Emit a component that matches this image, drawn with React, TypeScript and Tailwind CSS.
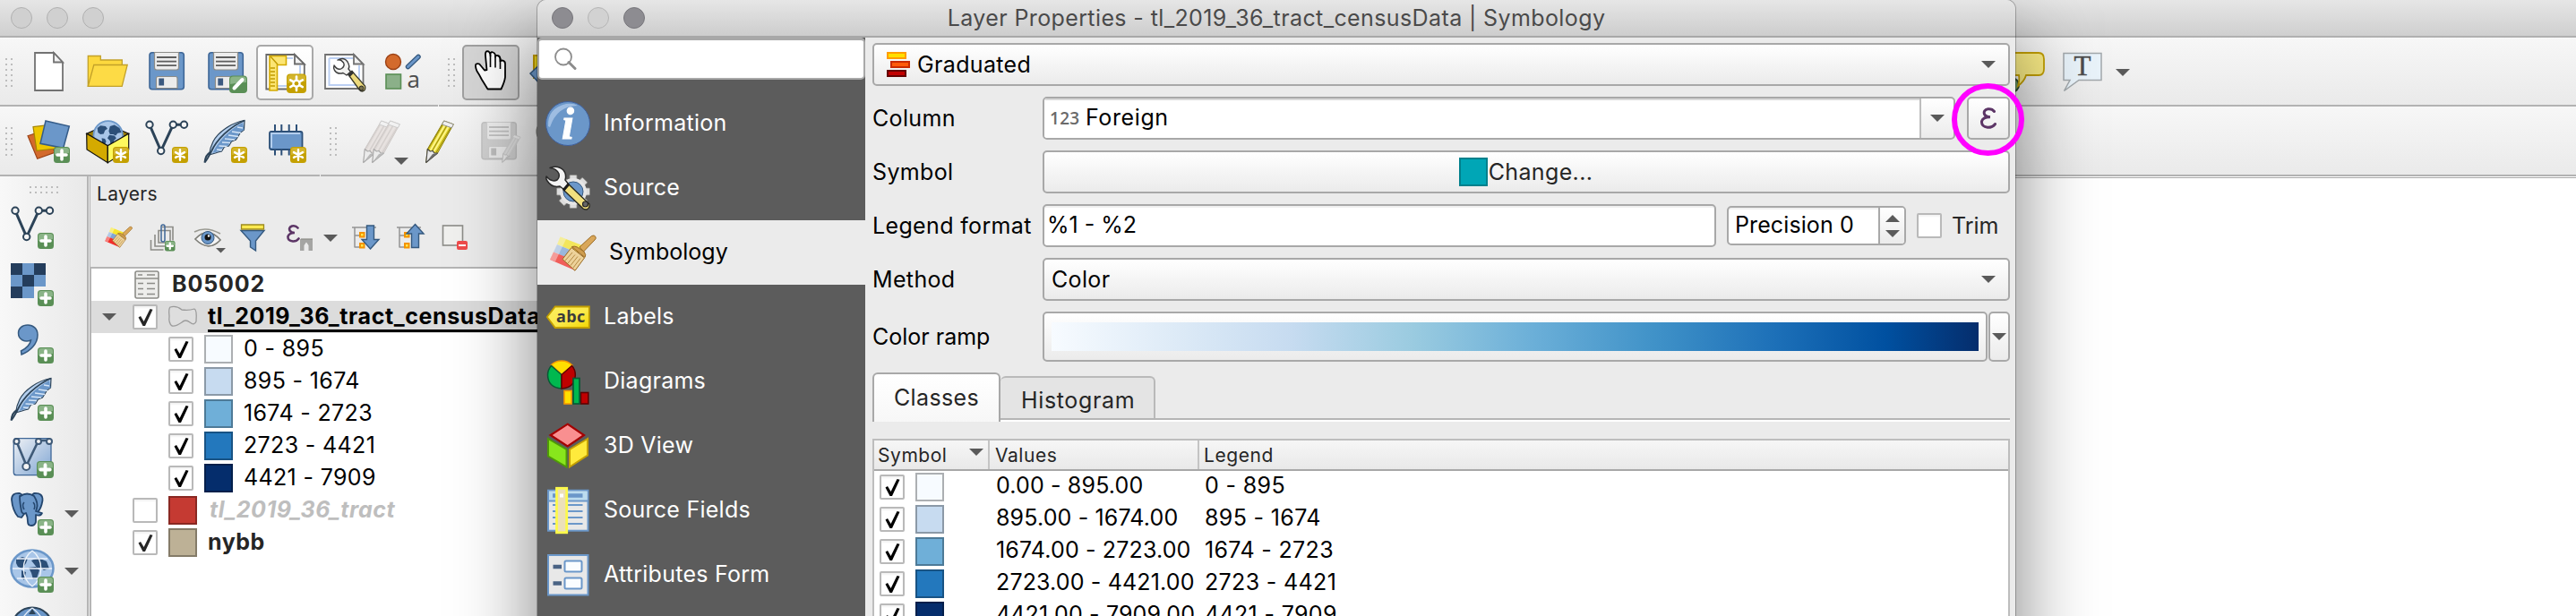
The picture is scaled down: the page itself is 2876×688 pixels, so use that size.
import type { ReactNode } from "react";

const INK = "#2c4358";
const BLUE = "#6b97c9";

function Icon({ children, className = "size-12" }: { children: ReactNode; className?: string }) {
  return (
    <svg viewBox="0 0 48 48" className={`shrink-0 overflow-visible ${className}`} fill="none">
      {children}
    </svg>
  );
}

function Arrow({ up = false, className = "" }: { up?: boolean; className?: string }) {
  return (
    <svg viewBox="0 0 16 8" className={`h-2 w-4 shrink-0 ${className}`}>
      <path d={up ? "M0 8h16L8 0z" : "M0 0h16L8 8z"} fill="#5a5a5a" />
    </svg>
  );
}

/* ---------- badges ---------- */

function PlusBadge({ x = 30, y = 30, s = 18 }: { x?: number; y?: number; s?: number }) {
  return (
    <g transform={`translate(${x} ${y}) scale(${s / 18})`}>
      <rect width="18" height="18" rx="3.5" fill="#5a8f56" />
      <path d="M1 9V4q0-3 3-3h10q3 0 3 3v3q-8 0-16 2z" fill="#8ab487" />
      <path d="M9 4v10M4 9h10" stroke="#fff" strokeWidth="3.6" strokeLinecap="round" />
    </g>
  );
}

function StarBadge({ x = 30, y = 30, s = 18 }: { x?: number; y?: number; s?: number }) {
  return (
    <g transform={`translate(${x} ${y}) scale(${s / 18})`}>
      <rect width="18" height="18" rx="3.5" fill="#c4a000" />
      <path d="M1 9V4q0-3 3-3h10q3 0 3 3v3q-8 0-16 2z" fill="#d3b52c" />
      <path d="M9 3.2v11.600M4 6.100l10 5.800M14 6.100L4 11.900" stroke="#fff" strokeWidth="2.4" strokeLinecap="round" />
    </g>
  );
}

function GearBadge() {
  return (
    <g transform="translate(26 26.5)">
      <rect width="22" height="21.5" rx="4" fill="#c4a000" />
      <path d="M1 10V4.500q0-3.500 3.500-3.500h13q3.500 0 3.500 3.500v4q-10 0-20 2z" fill="#d3b52c" />
      <path d="M11 3v15.600M4.200 6.900l13.600 7.800M17.800 6.900L4.200 14.700" stroke="#fff" strokeWidth="2.600" strokeLinecap="round" />
      <circle cx="11" cy="10.800" r="4.600" fill="#fff" />
      <circle cx="11" cy="10.800" r="2.300" fill="#c4a000" />
    </g>
  );
}

/* ---------- shared drawings ---------- */

function Floppy() {
  return (
    <>
      <rect x="5" y="2.700" width="38.300" height="41" rx="3" fill={BLUE} stroke="#3f6797" strokeWidth="1.600" />
      <path d="M10.500 2.500h27v17q0 2.500-2.500 2.500H13q-2.500 0-2.500-2.500z" fill="#ededed" stroke="#8c8c88" strokeWidth="1.200" />
      <path d="M13 8h22M13 12.700h22M13 17.200h22" stroke="#5d5d5d" strokeWidth="1.800" />
      <path d="M12.500 42.500v-11q0-2 2-2h19.500q2 0 2 2v11z" fill="#ececec" stroke="#8c8c88" strokeWidth="1.200" />
      <rect x="15.300" y="31.500" width="5.800" height="8" fill="#3c5a80" />
    </>
  );
}

function Feather() {
  return (
    <>
      <path d="M45 .500C30 3 15 14 10 24c-3 6-4 10-4.500 15l7-2 3-1 4-1 3-5 5-1 3-5 5-2 5-8 4-3z" fill="#b4cfee" stroke={INK} strokeWidth="1.200" />
      <path d="M43 3l1.500 8-5 3-4 7-6 3-3 5-5 1-3 4-9 3C15 24 28 11 43 3z" fill={BLUE} />
      <path d="M37 8l6 1M31 13l10 1.500M27 17l11 1.500M23 21l11 1M20 25l9 .500M16.500 29l9 .500M14 33l6 .500" stroke="#d5e5f7" strokeWidth="1.300" />
      <path d="M45 .500C28 8 14 22 8 35c-2.500 5-4.500 9-7.500 12.500" stroke={INK} strokeWidth="1.800" />
      <path d="M.500 47.500C1 43 3 38 7 36" stroke={INK} strokeWidth="2" />
    </>
  );
}

function Nodes() {
  return (
    <>
      <path d="M5 5.300l12.700 29.400L31.300 5.300h12" stroke={INK} strokeWidth="3" />
      <g fill="#f4f4f4" stroke={INK} strokeWidth="2">
        <circle cx="5" cy="5.300" r="3.700" />
        <circle cx="31.300" cy="5.300" r="3.700" />
        <circle cx="43.500" cy="5.300" r="3.700" />
        <circle cx="17.700" cy="34.500" r="3.700" />
      </g>
    </>
  );
}

function Pencil({ body = "#e3d32b", light = "#fdf588", dark = "#8f820c" }: { body?: string; light?: string; dark?: string }) {
  return (
    <>
      <path d="M8.700 47.500l1.600-15L28.700 1l10.600 3.800L21.500 37z" fill={body} stroke={dark} strokeWidth="1" />
      <path d="M13.500 34L30 5M17.500 35L34 7" stroke={light} strokeWidth="2" />
      <path d="M11 32.500L28 4M15.500 34.500L32 6M20 36.500L36.500 8" stroke={dark} strokeWidth=".9" />
      <path d="M26.500 5L28.700 1l10.600 3.800-2 4z" fill="#f0f0f0" stroke="#8b8b8b" strokeWidth=".9" />
      <path d="M8.700 47.500l1.600-15 3 2.500 3-.5 1.500 2.500 3.700 0z" fill="#e9e9e9" stroke="#444" strokeWidth="1.100" strokeLinejoin="round" />
      <path d="M8.700 47.500L16 38l5.500-1z" fill="#6e6e6e" />
    </>
  );
}

function Wrench() {
  return (
    <>
      <path d="M29 27.500l4-4L47.500 40q1.500 5-3 6-2 0-3.500-2z" fill="#ecd97c" stroke="#3a3a2a" strokeWidth="1.300" />
      <circle cx="43.500" cy="42.500" r="2.500" fill="#77704a" stroke="#222" strokeWidth="1" />
      <path d="M28 27l5-4.500 2 3-4.500 4.500z" fill="#333" />
      <path d="M17 11q7-4 11 2 3 5 1 8l2.500 3-4.500 4-4-2.500q-6 2-9.500-3-1.500-3-.5-5.500 4 6 8.500 3.500 4-3 2-6.500-3-4-6.500-3z" fill="#f2f2f0" stroke="#3d3d3d" strokeWidth="1.400" strokeLinejoin="round" />
    </>
  );
}

function Globe({ cx, cy, r }: { cx: number; cy: number; r: number }) {
  return (
    <g transform={`translate(${cx} ${cy}) scale(${r / 24})`}>
      <circle r="23" fill="#a9c6e8" stroke={BLUE} strokeWidth="2.500" />
      <path d="M-17-12l5-4 8 1 3 4-4 3-2 5-5 1-4-3zM-10 4l5 1 2 4-3 7-3 1zM3-15l7-2 8 5 3 7-6 1-3 4-4-2-5 0-2-5zM2-1l8 1 3 4-4 4-1 7-4 0-1-7-4-4z" fill="#2c4f78" />
      <path d="M15 6l3 1-1 4-3 0z" fill="#2c4f78" />
    </g>
  );
}

function BrushArt({ faded = false }: { faded?: boolean }) {
  return (
    <>
      <g opacity={faded ? 0.75 : 1}>
        <path d="M15.500 6.500L40 16l-4 9L12 15z" fill="#f6e52c" />
        <path d="M12 15l24 10-4 9L8 23.500z" fill="#7fa6d6" />
        <path d="M8 23.500L34 34l-2 10L4 32z" fill="#f22f2a" />
        <path d="M15.500 6.500L22 9 10 34l-6-2z" fill="#fff" opacity=".4" />
      </g>
      <path d="M37 18L50.500 5.500q3-1.500 4.500 1 .8 2-1 3.500L41.500 23z" fill="#d9a75a" stroke="#9a6a22" strokeWidth="1" />
      <path d="M28.500 17.500q3-1 6 .5l7.500 5q3 4 1 6.500z" fill="#cf9d4f" stroke="#9a6a22" strokeWidth="1" />
      <path d="M28 18.500L42.500 30 32 44.300 18 31.500z" fill="#edd29a" stroke="#9a6a22" strokeWidth="1" />
      <path d="M29 24L21 33M32 26.500L24 36M35 28.500L27 38.500M38 30.500L30 41" stroke="#b58a45" strokeWidth="1" />
    </>
  );
}

/* ---------- small controls ---------- */

function Check({ on = true, dark = false }: { on?: boolean; dark?: boolean }) {
  return (
    <span className="grid size-7 shrink-0 place-items-center rounded-[2px] border-2 border-[#b9b9b9] bg-white shadow-[inset_0_2px_2px_rgba(0,0,0,0.05)]">
      {on && (
        <svg viewBox="0 0 24 24" className="size-6 overflow-visible">
          <path d="M4.500 12.500l2.500-1.500 3.600 6L17.500 3l3 .8L12 22H9.500z" fill={dark ? "#262626" : "#000"} />
        </svg>
      )}
    </span>
  );
}

function DotGrip({ wide = false }: { wide?: boolean }) {
  return (
    <span
      className={`shrink-0 bg-[radial-gradient(circle_at_1px_1px,#bdbdbd_1.200px,transparent_1.500px)] bg-[length:6px_6px] ${wide ? "h-2 w-[34px]" : "h-[33px] w-2"}`}
    />
  );
}

function Slot({ children, className = "" }: { children?: ReactNode; className?: string }) {
  return <div className={`flex h-[62px] w-[66px] shrink-0 items-center justify-center ${className}`}>{children}</div>;
}

/* ---------- main window ---------- */

function FileToolbar() {
  return (
    <div className="flex h-[75px] shrink-0 items-center bg-gradient-to-b from-[#f7f7f7] to-[#eaeaea] pt-[3px]">
      <div className="flex w-[21px] shrink-0 pl-1.5"><DotGrip /></div>
      <Slot className="pb-[2px]">
        <Icon>
          <path d="M9 3h21l10 10.500v31.500H9z" fill="#fff" stroke="#727272" strokeWidth="1.800" />
          <path d="M30 3v10.500h10z" fill="#f2f2f2" stroke="#727272" strokeWidth="1.800" />
        </Icon>
      </Slot>
      <Slot className="pb-[2px]">
        <Icon>
          <path d="M2.300 40V6.500h14v4.500h24v28z" fill="#fcd83e" stroke="#c2a12a" strokeWidth="1.300" />
          <path d="M8.800 16.500h37.400L40.200 40.300H2.300z" fill="#fddb45" stroke="#c2a12a" strokeWidth="1.300" />
        </Icon>
      </Slot>
      <Slot className="pb-[2px]"><Icon><Floppy /></Icon></Slot>
      <Slot className="pb-[2px]">
        <Icon>
          <Floppy />
          <rect x="28" y="28.500" width="20" height="19.500" rx="4" fill="#5a8f56" />
          <path d="M29 38v-5q0-3.500 3.500-3.500h11q3.500 0 3.500 3.500v3q-9 0-18 2z" fill="#8ab487" />
          <path d="M33.500 42.500l9-9.500" stroke="#fff" strokeWidth="4" strokeLinecap="round" />
        </Icon>
      </Slot>
      <Slot className="px-[1px]">
        <div className="grid h-[62px] w-16 place-items-center rounded-[5px] border-2 border-[#a9a9a9] bg-gradient-to-b from-white to-[#f4f4f4] pb-[2px]">
          <Icon>
            <path d="M3.300 5h31.500l11 11v27.500H3.300z" fill="#fff" stroke="#6a6a6a" strokeWidth="1.800" />
            <path d="M14 9h19M41 17v23H14" stroke="#bcd0f3" strokeWidth="2" />
            <path d="M35 5v10.500h10.800z" fill="#f2f2f2" stroke="#6a6a6a" strokeWidth="1.800" />
            <path d="M7 6.500h18.500v10H15.500V45H7z" fill="#fce573" stroke="#d4aa00" strokeWidth="1.600" />
            <path d="M8 7l8 9M8 20h5M8 24h5M8 28h5M8 32h5M8 36h5M8 40h5" stroke="#c09a00" strokeWidth="1.400" />
            <GearBadge />
          </Icon>
        </div>
      </Slot>
      <Slot className="pb-[2px]">
        <Icon>
          <path d="M3 5h32l10.500 11v27H3z" fill="#fff" stroke="#727272" strokeWidth="1.800" />
          <path d="M7.500 9H34M41 17v22H7.500V9" stroke="#bcd0f3" strokeWidth="2" />
          <path d="M35 5v10.500h10.500z" fill="#f2f2f2" stroke="#727272" strokeWidth="1.800" />
          <Wrench />
        </Icon>
      </Slot>
      <Slot className="pb-[2px]">
        <Icon>
          <circle cx="13" cy="13" r="8.500" fill="#d36a2c" stroke="#9c4216" strokeWidth="1.400" />
          <path d="M29.500 18.500L41 7.500" stroke="#35597f" strokeWidth="5.500" strokeLinecap="round" />
          <path d="M29.500 18.500L41 7.500" stroke={BLUE} strokeWidth="3" strokeLinecap="round" />
          <rect x="5" y="27" width="16.500" height="16" fill="#8bb089" stroke="#5a8f56" strokeWidth="1.600" />
          <text x="28.500" y="42" fontFamily="Open Sans, sans-serif" fontSize="26" fill="#4d4d4d">a</text>
        </Icon>
      </Slot>
      <div className="flex w-[33px] shrink-0 justify-end pr-[8px]"><DotGrip /></div>
      <div className="grid h-[62px] w-16 shrink-0 place-items-center rounded-[5px] border-2 border-[#a0a0a0] bg-[#d6d6d6] pb-[2px]">
        <Icon>
          <path d="M20.500 43.500L14 33Q11 27 8.500 23.500 6 17.500 7.500 15.500q3.500-1 5 1.500l4.500 5.500 2.500-.5-1.500-15.500q-.5-5 2-5.300 3 0 3.500 5V4q.5-2.500 3-1.500 2 .5 2.500 3v2q.5-2 2.500-1.500 2.500.5 3 3.500v3q1-1.500 3-.8 2.500.8 2.500 3.500v15q-.5 5-4.500 13.300z" fill="#fff" stroke="#000" strokeWidth="1.800" strokeLinejoin="round" />
          <path d="M23.500 6v13M29 6.500v13M34.500 9v12" stroke="#000" strokeWidth="1.600" />
        </Icon>
      </div>
      <div className="flex w-[60px] shrink-0 pl-[12px]">
        <Icon>
          <rect x="4" y="5" width="26" height="25" fill="#e8d21c" stroke="#c09a00" strokeWidth="2" />
          <path d="M0 25l12-11v24z" fill={BLUE} stroke="#35597f" strokeWidth="1.500" />
        </Icon>
      </div>
      <div className="ml-auto flex w-[650px] shrink-0 items-center pb-[2px]">
        <Icon className="h-12 w-14">
          <circle cx="16" cy="39" r="8" fill="#6fa06d" stroke="#2d4a2c" strokeWidth="2" />
          <path d="M0 3h46q6 0 6 7v11q0 7-6 7H32q-2 7-9 12 2-7 1-12H0z" fill="#fcee87" stroke="#c4a000" strokeWidth="1.800" />
        </Icon>
        <Icon className="ml-[18px] size-12">
          <path d="M4 3.500h42v30H21L4.500 45.500l6.500-12H4z" fill="#e9f3fa" stroke="#a2a8ac" strokeWidth="1.500" />
          <text x="25" y="28" textAnchor="middle" fontFamily="Liberation Serif, serif" fontSize="31" fill="#4d4d4d" stroke="#4d4d4d" strokeWidth=".5">T</text>
        </Icon>
        <Arrow className="ml-[14px] mt-px" />
      </div>
    </div>
  );
}

function DataToolbar() {
  return (
    <div className="flex h-[76px] shrink-0 items-center bg-gradient-to-b from-[#f7f7f7] to-[#eaeaea] pb-[2px] pt-[4px]">
      <div className="flex w-[21px] shrink-0 pl-1.5"><DotGrip /></div>
      <Slot>
        <Icon>
          <path d="M1 17.700L21 11l10 25.300-19.300 7z" fill="#d36a2c" stroke="#9c4216" strokeWidth="1.200" />
          <path d="M7 7.700L30 5l2 27-21 2.300z" fill="#edc600" stroke="#a58400" strokeWidth="1.200" />
          <path d="M21 1l26.300 6-6.600 24.300-25.700-5z" fill={BLUE} stroke="#355c89" strokeWidth="1.500" />
          <PlusBadge />
        </Icon>
      </Slot>
      <Slot>
        <Icon>
          <path d="M.7 15.300L24 5l23.700 10.300L24.300 28.700z" fill="#9a7c00" stroke="#111" strokeWidth="1.200" />
          <Globe cx={24.700} cy={17.500} r={17} />
          <path d="M.7 15.300l23.600 13.400v19L1 33z" fill="#d4aa00" stroke="#111" strokeWidth="1.200" />
          <path d="M47.700 15.300L24.300 28.700v19L47.700 33z" fill="#fdf95e" stroke="#111" strokeWidth="1.200" />
          <StarBadge />
        </Icon>
      </Slot>
      <Slot><Icon><Nodes /><StarBadge /></Icon></Slot>
      <Slot><Icon><Feather /><StarBadge /></Icon></Slot>
      <Slot>
        <Icon>
          <path d="M13 5v8M20.300 5v8M28.700 5v8M37 5v8M13 32v7.500M20.300 32v7.500M28.700 32v7.500" stroke="#2d5078" strokeWidth="2" />
          <rect x="7" y="13" width="36.500" height="20" rx="2" fill={BLUE} stroke="#2d5078" strokeWidth="1.800" />
          <path d="M9 31V15h32" stroke="#b4cfee" strokeWidth="2" />
          <StarBadge />
        </Icon>
      </Slot>
      <div className="flex w-[41px] shrink-0 pl-[17px]"><DotGrip /></div>
      <div className="relative flex w-[66px] shrink-0 justify-center">
        <Icon>
          <g opacity=".4">
            <g transform="translate(-4 0)"><Pencil body="#c9bcb6" light="#dccfca" dark="#9c908b" /></g>
            <g transform="translate(6 0)"><Pencil body="#c9bcb6" light="#dccfca" dark="#9c908b" /></g>
          </g>
        </Icon>
        <Arrow className="absolute bottom-[-2px] right-[2px]" />
      </div>
      <Slot><Icon><Pencil /></Icon></Slot>
      <Slot>
        <Icon>
          <g opacity=".3" className="grayscale">
            <Floppy />
            <g transform="translate(22 16) scale(.66)"><Pencil body="#b9aca6" light="#ccbfba" dark="#8c807b" /></g>
          </g>
        </Icon>
      </Slot>
      <Slot><Icon><circle cx="11" cy="13" r="11" fill="#b9b9b5" stroke="#9a9a96" strokeWidth="1.500" /></Icon></Slot>
    </div>
  );
}

function Toolbox() {
  return (
    <div className="flex w-[97px] shrink-0 flex-col gap-4 bg-gradient-to-r from-[#f8f8f8] to-[#e9e9e9] pl-3 pt-[11px]">
      <div className="-mb-[2px] h-[8px] pl-[21px] leading-none"><span className="flex"><DotGrip wide /></span></div>
      <Icon><Nodes /><PlusBadge /></Icon>
      <Icon>
        <g fill={BLUE}><rect width="39" height="39" /></g>
        <path d="M0 0h13v13H0zM26 0h13v13H26zM13 13h13v13H13zM0 26h13v13H0z" fill="#243d5c" />
        <rect x="26" y="26" width="13" height="13" fill="#f1f1f1" />
        <PlusBadge />
      </Icon>
      <Icon>
        <path d="M19 5c6 0 11 4 11 11 0 10-8 18-18 22l-.5-4c6-3 10-7 11-12-7 3-14-1-14-8 0-5 4-9 10.500-9z" fill={BLUE} stroke="#35597f" strokeWidth="1.500" />
        <PlusBadge />
      </Icon>
      <Icon><Feather /><PlusBadge /></Icon>
      <Icon>
        <defs>
          <linearGradient id="sheet" x1="0" y1="0" x2="1" y2="1">
            <stop offset="0" stopColor="#eef1f5" /><stop offset="1" stopColor="#7fa5d3" />
          </linearGradient>
        </defs>
        <rect x="3.300" y="3.700" width="41.700" height="41" rx="3" fill="url(#sheet)" stroke="#3f6797" strokeWidth="1.300" />
        <path d="M6 6l11.500 28L31 6h12" stroke="#3f5a78" strokeWidth="2.600" />
        <g fill="#f4f4f4" stroke="#3f5a78" strokeWidth="2">
          <circle cx="6.500" cy="7" r="3" /><circle cx="31" cy="7" r="3" /><circle cx="43" cy="7" r="3" /><circle cx="17.300" cy="35" r="4" />
        </g>
        <PlusBadge x={29} y={29} s={19} />
      </Icon>
      <div className="flex items-center">
        <Icon>
          <g fill={BLUE} stroke="#24466e" strokeWidth="1.800" strokeLinejoin="round">
            <path d="M10 1Q1 0 1 8q1 12 7 19l4 1 3-4V4z" />
            <path d="M26 1q10-1 9.500 8Q34 18 30 22l-4 2-4-6V4z" />
            <path d="M11 4q7-5 15 0 5 8 3 14l-1 3 7 2q-2 4-7 2v8q-1 4-5 4t-4-4q0-6-2-10-4 2-5-2-2-10-2-17z" />
          </g>
          <path d="M15 11q-3 3 0 8M25 11q3 3 1 8" stroke="#24466e" strokeWidth="1.500" />
          <PlusBadge />
        </Icon>
        <Arrow className="ml-3" />
      </div>
      <div className="flex items-center">
        <Icon>
          <ellipse cx="24" cy="21" rx="23.500" ry="20.500" fill="#a9c6e8" stroke={BLUE} strokeWidth="2.500" />
          <path d="M6 11l7-3 6 2-2 5-4 6-5-2-2-4zM12 23l5 2-2 9-3-3zM23 12l8-3 9 4 3 8-6 2-4-3-3 1zM20 20l8-1 4 4-3 9-4 1-2-7z" fill="#2c4f78" />
          <path d="M2 21h44M7 10h34M7 32h34M24 1c-13 10-13 30 0 40M24 1c13 10 13 30 0 40" stroke="#eef4fb" strokeWidth="1.300" />
          <PlusBadge />
        </Icon>
        <Arrow className="ml-3" />
      </div>
      <Icon>
        <circle cx="24" cy="23" r="22.500" fill={BLUE} stroke={INK} strokeWidth="2.200" />
        <path d="M24 1c-11 8-13 16-13 22M24 1c11 8 13 16 13 22" stroke="#e4edf8" strokeWidth="1.500" />
        <path d="M20 8l4-6 4 6z" fill={INK} />
      </Icon>
    </div>
  );
}

const CLASSES = [
  { swatch: "bg-[#f7fbff]", legend: "0 - 895", values: "0.00 - 895.00" },
  { swatch: "bg-[#c7dbf0]", legend: "895 - 1674", values: "895.00 - 1674.00" },
  { swatch: "bg-[#6fafd8]", legend: "1674 - 2723", values: "1674.00 - 2723.00" },
  { swatch: "bg-[#2378bd]", legend: "2723 - 4421", values: "2723.00 - 4421.00" },
  { swatch: "bg-[#052d6c]", legend: "4421 - 7909", values: "4421.00 - 7909.00" },
];

function Swatch({ color }: { color: string }) {
  return <span className={`size-8 shrink-0 border-2 border-black/30 ${color}`} />;
}

function TreeIcon({ up = false }: { up?: boolean }) {
  return (
    <svg viewBox="0 0 32 32" className="size-8 shrink-0 overflow-visible" fill="none">
      <path d="M0 5h27M3 5v22.500M3 14h6M3 27h6" stroke="#949494" strokeWidth="1.500" />
      <path d="M9 11h4.500v4.500H9zM9 23h4.500v4.500H9z" fill="#fce94f" stroke="#f59300" strokeWidth="2" />
      {up ? (
        <path d="M20.500 1.500L30 12h-5.500v15.500h-8V12H11z" fill={BLUE} stroke="#35597f" strokeWidth="1.400" />
      ) : (
        <path d="M20.500 29L30 18.500h-5.500V3h-8v15.500H11z" fill={BLUE} stroke="#35597f" strokeWidth="1.400" />
      )}
    </svg>
  );
}

function LayersPanel() {
  return (
    <div className="flex min-w-0 flex-1 flex-col bg-[#ebebeb]">
      <div className="h-[35px] pl-[7px] pt-[2px] text-[21px] leading-[35px] tracking-[0.32px] text-[#262626]">Layers</div>
      <div className="flex h-[66px] items-center pl-[15px]">
        <svg viewBox="2 4 54 42" className="mr-[18px] h-[26px] w-8"><BrushArt /></svg>
        <svg viewBox="0 0 32 32" className="mr-[18px] size-8 overflow-visible" fill="none">
          <g stroke="#8c8c88" strokeWidth="1.600">
            <path d="M2.500 19v11h14M7 13v13h12M11 8.500V22h13V8.500zM15 4.500h12v15" />
          </g>
          <path d="M14 6v14M18 9v10q0 2-2 2t-2-2V4q0-2 2-2t2 2v14" stroke="#3f6797" strokeWidth="1.500" />
          <PlusBadge x={18} y={20} s={11.500} />
        </svg>
        <svg viewBox="0 0 32 32" className="mr-[18px] size-8 overflow-visible" fill="none">
          <path d="M1 10q13-7 29 2M2 18q14-15 28 1-13 14-28-1z" stroke="#9a9a92" strokeWidth="1.500" fill="none" />
          <path d="M2 18q14-15 28 1-13 14-28-1z" fill="#f4f4f4" stroke="#7c7c76" strokeWidth="1.300" />
          <circle cx="16" cy="16.500" r="7" fill={BLUE} stroke="#35597f" strokeWidth="1" />
          <circle cx="16" cy="16" r="3.500" fill="#111" />
          <circle cx="17" cy="14.500" r="1.200" fill="#fff" />
          <path d="M25 28h11l-5.500 5.500z" fill="#5a5a5a" />
        </svg>
        <svg viewBox="0 0 32 32" className="mr-[21px] size-8 overflow-visible" fill="none">
          <path d="M3 8.500h26L19.500 20v11l-6-4v-7z" fill={BLUE} stroke="#35597f" strokeWidth="1.400" />
          <path d="M3.500 2h25v5h-25z" fill="#fce94f" stroke="#9c8a1c" strokeWidth="1.300" />
        </svg>
        <svg viewBox="0 0 32 32" className="mr-[10px] size-8 overflow-visible" fill="none">
          <path d="M13.500 5.500Q11 2.500 7 3.500 3 5 4.500 8.500 6 11 10 11 4 11 2.500 15 2 20 8 20.500q4 .2 6.500-3" stroke="#5c3566" strokeWidth="2.600" strokeLinecap="round" />
          <path d="M16 18h14v13h-4.500v-6l-2.500-3.500-2.500 3.500v6H16z" fill="#a5a5a3" />
          <path d="M17 18h13" stroke="#8c8c88" strokeWidth="1.200" />
        </svg>
        <Arrow className="mr-[16px] mt-px" />
        <div className="mr-[18px] flex"><TreeIcon /></div>
        <div className="mr-[18px] flex"><TreeIcon up /></div>
        <svg viewBox="0 0 32 32" className="size-8 overflow-visible" fill="none">
          <rect x="1.500" y="3" width="22" height="22" fill="#f0f0ee" stroke="#8c8c88" strokeWidth="1.600" />
          <rect x="17" y="20" width="12" height="10" rx="2" fill="#ef4b4b" />
          <path d="M19 25h8" stroke="#fff" strokeWidth="2" />
        </svg>
      </div>
      <div className="flex flex-1 flex-col border-l border-t-2 border-[#b5b5b5] bg-white text-[25px] text-[#262626]">
        <div className="flex h-9 shrink-0 items-center pl-[48px] font-bold tracking-[0.900px]">
          <svg viewBox="0 0 28 32" className="mr-[14px] h-8 w-7" fill="none">
            <rect x="1" y="1" width="26" height="30" rx="2" fill="#ededeb" stroke="#8c8c88" strokeWidth="1.600" />
            <path d="M1 9h26" stroke="#8c8c88" strokeWidth="1.500" />
            <path d="M4 5h5M14 5h9M4 14.500h6M14 14.500h9M4 20.500h6M14 20.500h9M4 26.500h6M14 26.500h9" stroke="#8c8c88" strokeWidth="1.700" />
          </svg>
          B05002
        </div>
        <div className="flex h-9 shrink-0 items-center bg-[#dcdcdc] pl-[12px] font-bold text-black">
          <Arrow className="mr-[18px]" />
          <Check dark />
          <svg viewBox="0 0 32 24" className="ml-3 mr-3 h-6 w-8 overflow-visible">
            <path d="M2 1q7-2 13 3 8 1 14-1 3 1 2 14-2 5-7 1-5-4-9 0-7 5-11 4Q0 19 1 11 0 3 2 1z" fill="#dedede" stroke="#9b9b9b" strokeWidth="1.300" />
          </svg>
          <span className="flex h-[33px] items-center whitespace-nowrap border-b-[3px] border-black pt-[3px] tracking-[0.600px]">tl_2019_36_tract_censusData</span>
        </div>
        {CLASSES.map((c) => (
          <div key={c.legend} className="flex h-9 shrink-0 items-center pl-[86px] tracking-[0.350px] text-black">
            <Check />
            <span className="ml-3 mr-3 flex"><Swatch color={c.swatch} /></span>
            {c.legend}
          </div>
        ))}
        <div className="flex h-9 shrink-0 items-center pl-[46px] font-bold italic tracking-[0.500px] text-[#bebebe]">
          <Check on={false} />
          <span className="ml-3 mr-[14px] flex"><Swatch color="bg-[#c53a32]" /></span>
          tl_2019_36_tract
        </div>
        <div className="flex h-9 shrink-0 items-center pl-[46px] font-bold tracking-[0.500px]">
          <Check dark />
          <span className="ml-3 mr-3 flex"><Swatch color="bg-[#bdb196]" /></span>
          nybb
        </div>
      </div>
    </div>
  );
}

/* ---------- dialog ---------- */

const SECTIONS: { label: string; icon: ReactNode }[] = [
  {
    label: "Information",
    icon: (
      <Icon>
        <circle cx="24" cy="24" r="24.500" fill={BLUE} stroke="#3f5f9c" strokeWidth="1" />
        <path d="M2 27Q1 7 22 2q8-1 13 2Q12 4 4 28z" fill="#b4cdec" opacity=".7" />
        <text x="24" y="41" textAnchor="middle" fontFamily="Liberation Serif, serif" fontStyle="italic" fontWeight="700" fontSize="50" fill="#fff" stroke="#fff" strokeWidth="1">i</text>
      </Icon>
    ),
  },
  {
    label: "Source",
    icon: (
      <Icon>
        <g transform="translate(30 28)">
          <g fill="#dcdcdc" stroke="#8c8c88" strokeWidth=".8">
            {[0, 45, 90, 135].map((a) => (
              <rect key={a} x="-4" y="-18.500" width="8" height="37" rx="1" transform={`rotate(${a})`} />
            ))}
          </g>
          <circle r="15" fill="#e6e6e6" />
          <circle r="11" fill={BLUE} stroke="#35597f" strokeWidth="1" />
        </g>
        <path d="M19 26l6-6 23 22q1 4-3 6-4 0-5-2z" fill="#f2e07e" stroke="#2b2b20" strokeWidth="1.400" />
        <circle cx="43.500" cy="42" r="3" fill="#666" stroke="#222" strokeWidth="1.200" />
        <path d="M4 1.500Q13-2 19 4q4 5 2 11l4 5-5 6-5-4Q6 24 1 16q-2-3-1-5 6 7 12 4 3-3 2-7-3-6-10-6.500z" fill="#f4f4f4" stroke="#2b2b2b" strokeWidth="1.500" strokeLinejoin="round" />
        <path d="M19 26.500l6-7" stroke="#1b1b1b" strokeWidth="3" />
      </Icon>
    ),
  },
  { label: "Symbology", icon: <Icon><BrushArt faded /></Icon> },
  {
    label: "Labels",
    icon: (
      <Icon>
        <defs>
          <linearGradient id="tag" x1="0" y1="0" x2="1" y2="1">
            <stop offset="0" stopColor="#fcf060" /><stop offset=".55" stopColor="#fbe94a" /><stop offset="1" stopColor="#f2d600" />
          </linearGradient>
        </defs>
        <path d="M.8 24l9-11.500h38v23.500h-38z" fill="url(#tag)" stroke="#c4a000" strokeWidth="1.800" />
        <text x="27.300" y="29.500" textAnchor="middle" fontFamily="Open Sans, sans-serif" fontWeight="700" fontSize="18" letterSpacing=".3" fill="#3b3b3b">abc</text>
      </Icon>
    ),
  },
  {
    label: "Diagrams",
    icon: (
      <Icon>
        <path d="M17 16.500L5.500 5.500Q10 1 17 1t12 5z" fill="#ffdf00" stroke="#f59a00" strokeWidth="1.500" />
        <path d="M17 16.500V32Q2 31 1.500 17q0-6 4-10.500z" fill="#00b84f" stroke="#065a34" strokeWidth="1.500" />
        <path d="M17 16.500V32q15-1 15.300-15 .2-6-3.800-10.500z" fill="#bf0000" stroke="#5f0000" strokeWidth="1.500" />
        <rect x="20" y="34.500" width="8" height="14.500" fill="#ffdf00" stroke="#f59a00" strokeWidth="1.600" />
        <rect x="38.500" y="36.500" width="8.300" height="12.500" fill="#bf0000" stroke="#5f0000" strokeWidth="1.600" />
        <rect x="30" y="20.500" width="7" height="28.500" fill="#00b84f" stroke="#065a34" strokeWidth="1.700" />
      </Icon>
    ),
  },
  {
    label: "3D View",
    icon: (
      <Icon>
        <path d="M2 16l20.500 12v19.500L2 35.500z" fill="#88e61c" stroke="#4e9a06" strokeWidth="2" />
        <path d="M46 16L26 28v19.500l20-13z" fill="#ffea3c" stroke="#c4a000" strokeWidth="2" />
        <path d="M23.700-.3L42 12 23.700 24.500 4.600 12z" fill="#f98f90" stroke="#a40000" strokeWidth="2.200" />
      </Icon>
    ),
  },
  {
    label: "Source Fields",
    icon: (
      <Icon>
        <rect x="2" y="1.700" width="44.500" height="45" fill="#e8e8e8" stroke={BLUE} strokeWidth="2" />
        <rect x="3" y="2.700" width="42.500" height="10" fill="#bcdcef" />
        <path d="M2 13.500h44.500" stroke={BLUE} strokeWidth="1.800" />
        <path d="M7 7.500h33.500" stroke={BLUE} strokeWidth="4.500" />
        <path d="M7 18h33.500M7 25h33.500M7 32h33.500M7 39h33.500" stroke={BLUE} strokeWidth="2" />
        <rect x="11.500" y="-.700" width="11.200" height="49.500" fill="#ece0b8" stroke="#fdf94a" strokeWidth="2.800" />
        <rect x="15" y="5.500" width="4" height="4" fill="#fff" />
      </Icon>
    ),
  },
  {
    label: "Attributes Form",
    icon: (
      <Icon>
        <rect x="2" y="2" width="44.500" height="44.500" fill="#e8e8e8" stroke={BLUE} strokeWidth="2" />
        <rect x="20.500" y="8.500" width="19" height="12" rx="1.500" fill="#fafdff" stroke={BLUE} strokeWidth="2" />
        <rect x="20.500" y="27.500" width="19" height="12" rx="1.500" fill="#fafdff" stroke={BLUE} strokeWidth="2" />
        <path d="M7.500 15h9.500M7.500 33.500h9.500" stroke="#4a6384" strokeWidth="4.300" />
      </Icon>
    ),
  },
];

function Sidebar() {
  return (
    <div className="flex w-[366px] shrink-0 flex-col bg-[#5c5c5c]">
      <div className="flex h-[47px] shrink-0 items-center rounded-[5px] border-2 border-t-[3px] border-[#a8a8a8] bg-white pl-4">
        <svg viewBox="0 0 26 26" className="size-[26px]" fill="none" stroke="#8c8c8c">
          <circle cx="11" cy="10.500" r="9" strokeWidth="1.800" />
          <path d="M17 16.500l7 7" strokeWidth="3" strokeLinecap="round" />
        </svg>
      </div>
      <div className="flex flex-col pt-[13px]">
        {SECTIONS.map((s) => (
          <div
            key={s.label}
            className={`flex h-[72px] items-center pl-[10px] text-[25px] ${s.label === "Symbology" ? "bg-[#ebebeb] text-black" : "text-white"}`}
          >
            {s.icon}
            <span className={s.label === "Symbology" ? "ml-[22px] tracking-normal" : "ml-[16px] tracking-[0.250px]"}>{s.label}</span>
          </div>
        ))}
      </div>
    </div>
  );
}

const BUTTON = "rounded-[5px] border-2 border-[#a8a8a8] bg-gradient-to-b from-white to-[#ebebeb]";
const FIELD = "rounded-[5px] border-2 border-[#a8a8a8] bg-white shadow-[inset_0_2px_0_rgba(0,0,0,0.06)]";

function Row({ label, children, className = "h-12" }: { label: string; children: ReactNode; className?: string }) {
  return (
    <div className={`flex shrink-0 items-center ${className}`}>
      <div className="w-[190px] shrink-0 whitespace-nowrap pt-[2px]">{label}</div>
      {children}
    </div>
  );
}

function ClassTable() {
  return (
    <div className="mt-[19px] h-[300px] shrink-0 border-2 border-[#bdbdbd] bg-white tracking-[0.150px] text-black">
      <div className="flex h-[34px] border-b-2 border-[#a8a8a8] bg-gradient-to-b from-[#f6f6f6] to-[#e9e9e9] text-[21px] tracking-[0.550px] text-[#262626]">
        <div className="flex w-[129px] items-center border-r-2 border-[#c4c4c4] pl-[4px]">
          <span className="pt-[2px]">Symbol</span>
          <Arrow className="-mt-[6px] ml-auto mr-[5px]" />
        </div>
        <div className="flex w-[234px] items-center border-r-2 border-[#c4c4c4] pl-[6px] pt-[2px]">Values</div>
        <div className="flex items-center pl-[5px] pt-[2px]">Legend</div>
      </div>
      {CLASSES.map((c) => (
        <div key={c.legend} className="flex h-9 items-center pl-[6px]">
          <Check />
          <span className="ml-3 mr-[58px] flex"><Swatch color={c.swatch} /></span>
          <span className="w-[233px] whitespace-nowrap pb-[3px]">{c.values}</span>
          <span className="whitespace-nowrap pb-[3px] tracking-[0.350px]">{c.legend}</span>
        </div>
      ))}
    </div>
  );
}

function Symbology() {
  return (
    <div className="flex min-w-0 flex-1 flex-col bg-[#ebebeb] pl-2 pr-1.5 pt-[6px] text-[25px] tracking-[0.350px] text-black">
      <div className={`flex h-12 shrink-0 items-center pl-[14px] pr-[14px] ${BUTTON}`}>
        <svg viewBox="0 0 26 28" className="mr-[8px] h-7 w-[26px]">
          <path d="M1 1h20v6H1z" fill="#ffdf00" stroke="#ff9d00" strokeWidth="2" />
          <path d="M5 11h20v6H5z" fill="#ff5a0a" stroke="#c92a00" strokeWidth="2" />
          <path d="M1 21h20v6H1z" fill="#c00000" stroke="#640000" strokeWidth="2" />
        </svg>
        <span className="pt-[2px]">Graduated</span>
        <Arrow className="ml-auto" />
      </div>
      <div className="mt-3 flex flex-col gap-3">
        <Row label="Column">
          <div className={`flex h-12 w-[1019px] overflow-hidden ${BUTTON}`}>
            <div className="flex flex-1 items-center border-r-2 border-[#bdbdbd] bg-white pl-[6px] shadow-[inset_0_2px_0_#d9d9d9]">
              <span className="w-[40px] font-['Open_Sans'] text-[19px] font-semibold tracking-[0.300px] text-[#6a6a6a]">123</span>
              <span className="tracking-[0.600px]">Foreign</span>
            </div>
            <div className="grid w-[36px] place-items-center"><Arrow /></div>
          </div>
          <div className={`ml-[13px] grid h-12 w-12 place-items-center ${BUTTON}`}>
            <svg viewBox="0 0 20 24" className="h-6 w-5" fill="none">
              <path d="M16.500 4.500Q14 1.200 9.500 1.800 4 3 5.500 7.500 7 10.500 12 10.800 4 10.500 2.500 15.500 2 21.500 9 22.300q5.500.2 8.500-3.800" stroke="#5c3566" strokeWidth="3" strokeLinecap="round" />
            </svg>
          </div>
        </Row>
        <Row label="Symbol">
          <div className={`flex h-12 flex-1 items-center justify-center pr-[1px] text-[#262626] ${BUTTON}`}>
            <span className="mr-[1px] size-8 border-2 border-[#00808c] bg-[#00a6b6]" />
            <span className="pt-[2px]">Change...</span>
          </div>
        </Row>
        <Row label="Legend format">
          <div className={`flex h-12 w-[752px] items-center pl-[3px] tracking-normal ${FIELD}`}>%1 - %2</div>
          <div className={`ml-3 flex h-11 w-[200px] overflow-hidden ${FIELD}`}>
            <div className="flex w-[169px] items-center whitespace-nowrap border-r-2 border-[#a8a8a8] pl-[7px] tracking-[0.100px]">Precision 0</div>
            <div className="flex flex-1 flex-col items-center justify-center gap-[9px] bg-gradient-to-b from-white to-[#ebebeb]">
              <Arrow up />
              <Arrow />
            </div>
          </div>
          <div className="ml-3 flex items-center gap-[11px] tracking-normal text-[#262626]">
            <Check on={false} />
            <span className="pt-[2px]">Trim</span>
          </div>
        </Row>
        <Row label="Method">
          <div className={`flex h-12 flex-1 items-center pl-[8px] pr-[14px] ${BUTTON}`}>
            <span className="pt-[2px]">Color</span>
            <Arrow className="ml-auto" />
          </div>
        </Row>
        <Row label="Color ramp" className="h-14 tracking-normal">
          <div className={`flex h-14 flex-1 items-center px-2 ${BUTTON}`}>
            <div className="h-8 flex-1 bg-[linear-gradient(90deg,#f7fbff_0%,#deebf7_13%,#c6dbf0_26%,#9acbe0_39%,#6bafd8_52%,#4092c8_65%,#1d70b8_78%,#0050a0_90%,#052d6c_100%)]" />
          </div>
          <div className={`ml-[1px] grid h-14 w-6 place-items-center ${BUTTON}`}><Arrow /></div>
        </Row>
      </div>
      <div className="mt-3 flex h-[55px] shrink-0 items-end text-[#262626]">
        <div className="flex h-[55px] w-[143px] items-center rounded-t-[6px] border-2 border-b-0 border-[#a8a8a8] bg-gradient-to-b from-white to-[#f7f7f7] pl-[22px]">Classes</div>
        <div className="flex h-full flex-1 items-end border-b-2 border-white">
          <div className="flex h-full flex-1 items-end border-b-2 border-[#b5b5b5]">
            <div className="flex h-[47px] w-[173px] items-center rounded-t-[6px] border-2 border-b-0 border-l-0 border-[#b9b9b9] bg-[#e4e4e4] pl-[23px] pt-[6px] tracking-[0.650px]">Histogram</div>
          </div>
        </div>
      </div>
      <ClassTable />
    </div>
  );
}

function Dialog() {
  return (
    <div className="absolute left-[600px] top-0 flex h-[900px] w-[1650px] flex-col overflow-hidden rounded-t-[10px] bg-[#ebebeb] shadow-[0_0_0_1px_rgba(0,0,0,0.25),0_40px_90px_rgba(0,0,0,0.5)]">
      <div className="relative flex h-[42px] shrink-0 items-center justify-center border-b-2 border-[#a8a8a8] bg-gradient-to-b from-[#e6e6e6] to-[#cdcdcd] text-[25px] tracking-[0.390px] text-[#4a4a4a]">
        <div className="absolute left-4 flex gap-4">
          <span className="size-6 rounded-full border border-[#77767b] bg-[#8d8c91]" />
          <span className="size-6 rounded-full border border-[#b4b4b4] bg-[#d2d2d2]" />
          <span className="size-6 rounded-full border border-[#77767b] bg-[#8d8c91]" />
        </div>
        <span className="pt-[2px]">Layer Properties - tl_2019_36_tract_censusData | Symbology</span>
      </div>
      <div className="flex min-h-0 flex-1">
        <Sidebar />
        <Symbology />
      </div>
    </div>
  );
}

export default function App() {
  return (
    <div className="relative flex h-[688px] w-[2876px] flex-col overflow-hidden bg-white font-['Inter',sans-serif]">
      <div className="flex h-[42px] shrink-0 items-center gap-4 border-b-2 border-[#b0b0b0] bg-gradient-to-b from-[#e6e6e6] to-[#cfcfcf] pl-3">
        <span className="size-6 rounded-full border border-[#b0b0b0] bg-[#d0d0d0]" />
        <span className="size-6 rounded-full border border-[#b0b0b0] bg-[#d0d0d0]" />
        <span className="size-6 rounded-full border border-[#b0b0b0] bg-[#d0d0d0]" />
      </div>
      <FileToolbar />
      <div className="flex h-[2px] shrink-0 gap-[1px] bg-[#f5f5f5]"><span className="w-[489px] bg-[#b2b2b2]" /><span className="flex-1 bg-[#b2b2b2]" /></div>
      <DataToolbar />
      <div className="flex h-[2px] shrink-0 gap-[1px] bg-[#f5f5f5]"><span className="w-[357px] bg-[#b2b2b2]" /><span className="flex-1 bg-[#b2b2b2]" /></div>
      <div className="flex min-h-0 flex-1">
        <Toolbox />
        <div className="w-1 shrink-0 border-l-2 border-r border-[#b5b5b5] bg-[#ebebeb]" />
        <div className="flex w-[1200px]"><LayersPanel /></div>
        <div className="mt-[1px] flex-1 border-t border-[#a8a8a8] bg-white" />
      </div>
      <Dialog />
      <div className="pointer-events-none absolute left-[2179px] top-[93px] size-[81px] rounded-full border-[6px] border-[#ff00ff]" />
    </div>
  );
}
